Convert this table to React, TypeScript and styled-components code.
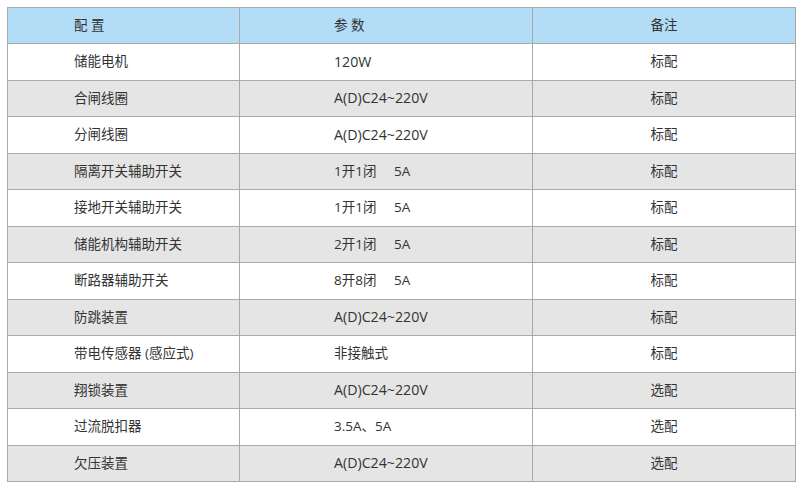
import React from 'react'
import styled, { createGlobalStyle } from 'styled-components'

const GlobalStyle = createGlobalStyle`
  html, body {
    margin: 0;
    padding: 0;
    background: #ffffff;
  }
  body {
    font-family: "Open Sans", "Noto Sans CJK SC", sans-serif;
  }
`

const Page = styled.div`
  width: 800px;
  height: 485px;
  padding: 7px 0 0 7px;
  box-sizing: border-box;
  background: #ffffff;
`

const Table = styled.table`
  width: 788px;
  border-collapse: collapse;
  table-layout: fixed;
  border: 1.5px solid #a9a9a9;
  color: #333333;
  font-size: 13.5px;
`

const HeadRow = styled.tr`
  height: 36px;
  background: #b3ddf6;
`

const Row = styled.tr<{ $shaded: boolean }>`
  height: 36.5px;
  background: ${(p) => (p.$shaded ? '#e5e5e5' : '#ffffff')};
`

const Cell = styled.td<{ $center?: boolean; $pad?: number }>`
  border: 1.5px solid #a9a9a9;
  padding: 0 0 0 ${(p) => (p.$center ? 0 : p.$pad ?? 0)}px;
  text-align: ${(p) => (p.$center ? 'center' : 'left')};
  vertical-align: middle;
  white-space: pre;
  line-height: 1;
`

const HeadCell = styled(Cell).attrs({ as: 'th' })`
  font-weight: normal;
`

// latin text in the reference runs a touch wider than the CJK glyphs
const Latin = styled.span`
  font-size: 14.2px;
`

const rows: [string, string, string][] = [
  ['储能电机', '120W', '标配'],
  ['合闸线圈', 'A(D)C24~220V', '标配'],
  ['分闸线圈', 'A(D)C24~220V', '标配'],
  ['隔离开关辅助开关', '1开1闭     5A', '标配'],
  ['接地开关辅助开关', '1开1闭     5A', '标配'],
  ['储能机构辅助开关', '2开1闭     5A', '标配'],
  ['断路器辅助开关', '8开8闭     5A', '标配'],
  ['防跳装置', 'A(D)C24~220V', '标配'],
  ['带电传感器 (感应式)', '非接触式', '标配'],
  ['翔锁装置', 'A(D)C24~220V', '选配'],
  ['过流脱扣器', '3.5A、5A', '选配'],
  ['欠压装置', 'A(D)C24~220V', '选配'],
]

const isLatin = (s: string) => /^[\x20-\x7E]+$/.test(s)

const App: React.FC = () => {
  return (
    <>
      <GlobalStyle />
      <Page>
        <Table>
          <colgroup>
            <col style={{ width: 232 }} />
            <col style={{ width: 293 }} />
            <col style={{ width: 263 }} />
          </colgroup>
          <thead>
            <HeadRow>
              <HeadCell $pad={66}>配 置</HeadCell>
              <HeadCell $pad={94}>参 数</HeadCell>
              <HeadCell $center>备注</HeadCell>
            </HeadRow>
          </thead>
          <tbody>
            {rows.map((r, i) => (
              <Row key={r[0]} $shaded={i % 2 === 1}>
                <Cell $pad={66}>{r[0]}</Cell>
                <Cell $pad={94}>{isLatin(r[1]) ? <Latin>{r[1]}</Latin> : r[1]}</Cell>
                <Cell $center>{r[2]}</Cell>
              </Row>
            ))}
          </tbody>
        </Table>
      </Page>
    </>
  )
}

export default App
